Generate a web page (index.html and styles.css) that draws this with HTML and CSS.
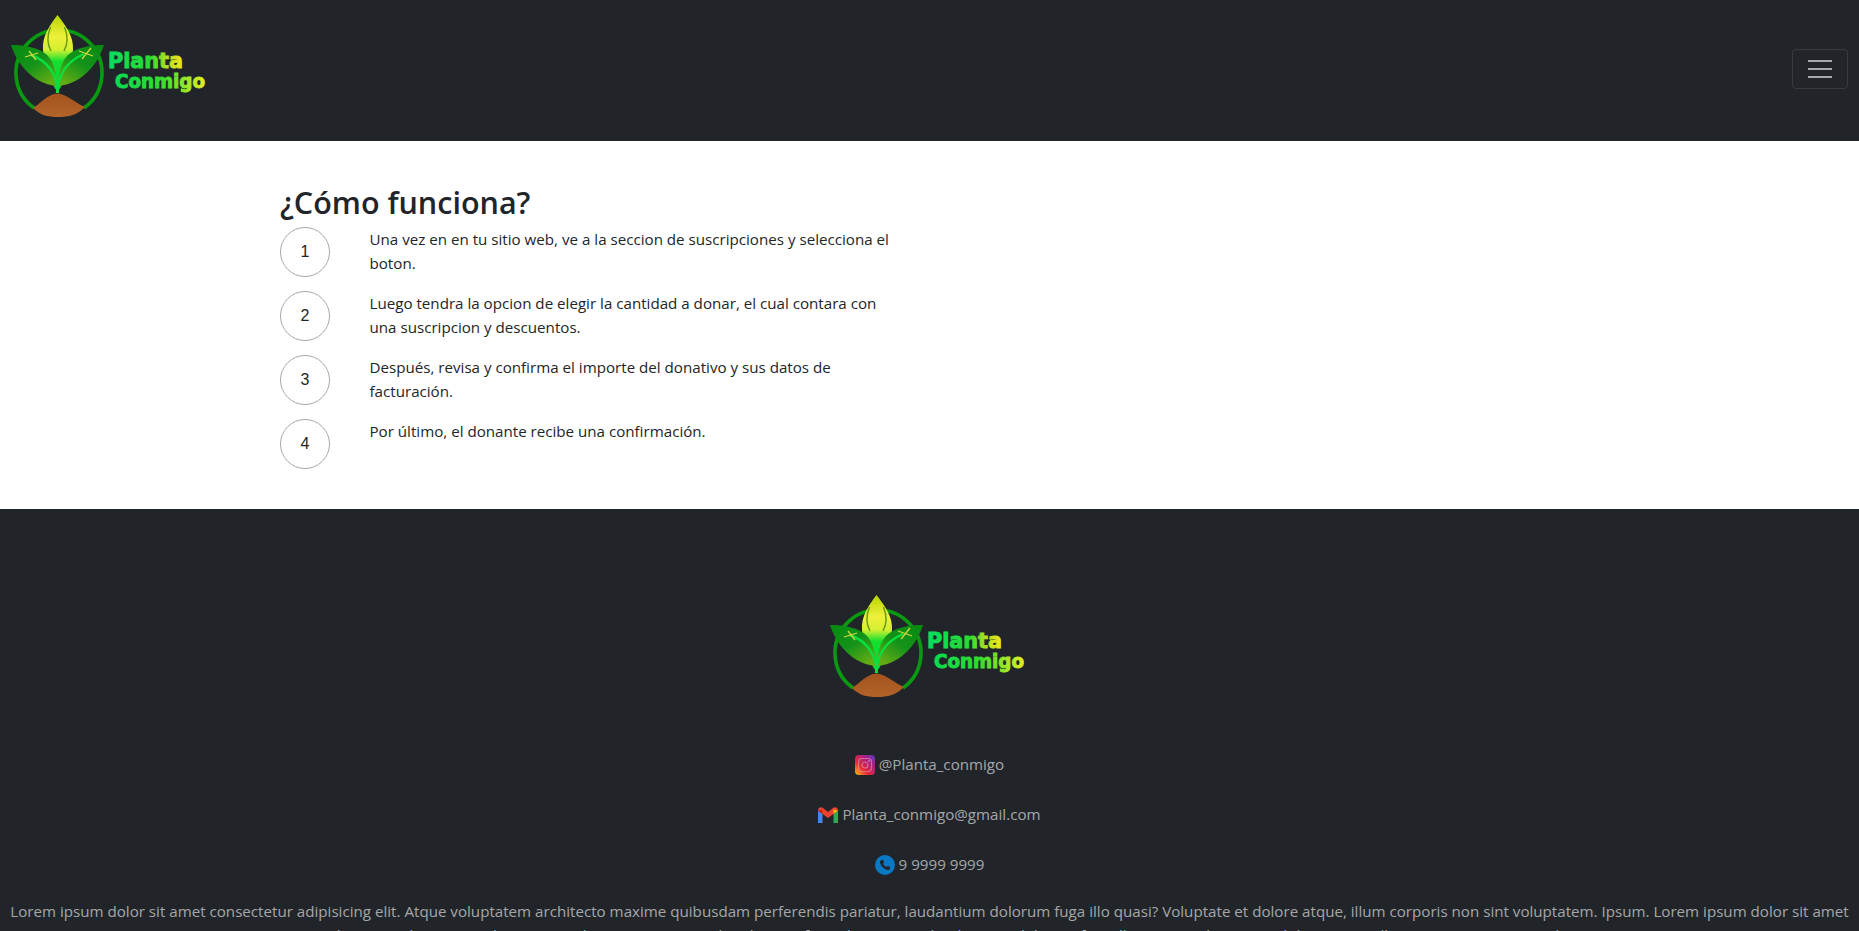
FILE: index.html
```html
<!DOCTYPE html>
<html lang="es">
<head>
<meta charset="utf-8">
<title>Planta Conmigo</title>
<link rel="stylesheet" href="styles.css">
</head>
<body>
<svg class="defs" width="0" height="0" aria-hidden="true">
  <defs>
    <linearGradient id="bud" x1="0" y1="0" x2="0" y2="1">
      <stop offset="0" stop-color="#b8d400"/><stop offset=".28" stop-color="#eef03a"/><stop offset=".45" stop-color="#d4f030"/><stop offset=".6" stop-color="#14e030"/><stop offset="1" stop-color="#08d838"/>
    </linearGradient>
    <linearGradient id="leafL" x1="0" y1="0" x2=".7" y2="1">
      <stop offset="0" stop-color="#078a10"/><stop offset=".55" stop-color="#14931a"/><stop offset="1" stop-color="#62ac14"/>
    </linearGradient>
    <linearGradient id="leafR" x1="1" y1="0" x2=".3" y2="1">
      <stop offset="0" stop-color="#078a10"/><stop offset=".55" stop-color="#14931a"/><stop offset="1" stop-color="#62ac14"/>
    </linearGradient>
    <linearGradient id="soil" x1="0" y1="0" x2="0" y2="1">
      <stop offset="0" stop-color="#a3531c"/><stop offset="1" stop-color="#b2642a"/>
    </linearGradient>
    <linearGradient id="word1" x1="108" y1="0" x2="184" y2="0" gradientUnits="userSpaceOnUse">
      <stop offset="0" stop-color="#08dc60"/><stop offset=".55" stop-color="#28dc30"/><stop offset=".8" stop-color="#c0e020"/><stop offset="1" stop-color="#f0e818"/>
    </linearGradient>
    <linearGradient id="word2" x1="115" y1="0" x2="205" y2="0" gradientUnits="userSpaceOnUse">
      <stop offset="0" stop-color="#08dc50"/><stop offset=".5" stop-color="#30dc30"/><stop offset="1" stop-color="#e8ee20"/>
    </linearGradient>
    <linearGradient id="ig" x1="0" y1="1" x2="1" y2="0">
      <stop offset="0" stop-color="#fcc70a"/><stop offset=".35" stop-color="#e8263a"/><stop offset=".7" stop-color="#a81f86"/><stop offset="1" stop-color="#5a3bc8"/>
    </linearGradient>
    <symbol id="logo" viewBox="8 13 200 115">
      <path d="M34 108A43 43 0 1 1 84 108" fill="none" stroke="#0a9a12" stroke-width="3.6"/>
      <path d="M57.5 15C50 25 42 36 43 50C44 64 50 82 57.5 92C65 82 72 64 73 50C74 36 65 25 57.5 15Z" fill="url(#bud)"/>
      <path d="M50.5 27C47 36 47 44 51 51M64.5 27C68 36 68 44 64 51" fill="none" stroke="#6c9c14" stroke-width="1.5"/>
      <path d="M11 45C24 45 43 47 51 60C55 67 56.5 76 57.5 86C40 85 20 72 11 45Z" fill="url(#leafL)"/>
      <path d="M104 45C91 45 72 47 64 60C60 67 58.5 76 57.5 86C75 85 95 72 104 45Z" fill="url(#leafR)"/>
      <path d="M58 93C57 76 50 62 31 55M57 93C58 76 65 62 84 54" fill="none" stroke="#08e040" stroke-width="2.4"/>
      <path d="M29 51L36 60M25 57L38 53M82 59L91 48M79 51L93 56" stroke="#cfd83c" stroke-width="1.3"/>
      <path d="M33 108C41 103 48 94 57.5 93.5C67 94 75 103 85 107C77 115 69 117 58 117C47 117 40 115 33 108Z" fill="url(#soil)"/>
      <text class="logo-word" x="108" y="68" fill="url(#word1)" stroke="url(#word1)" textLength="75" lengthAdjust="spacingAndGlyphs">Planta</text>
      <text class="logo-word logo-word-sm" x="115" y="88" fill="url(#word2)" stroke="url(#word2)" textLength="90" lengthAdjust="spacingAndGlyphs">Conmigo</text>
    </symbol>
  </defs>
</svg>

<nav class="navbar">
  <a class="brand" href="#"><svg class="logo"><use href="#logo"/></svg></a>
  <button class="toggler" aria-label="Menú"><span></span><span></span><span></span></button>
</nav>

<main class="how">
  <section class="how-col">
    <h2>¿Cómo funciona?</h2>
    <div class="step"><div class="num">1</div><p>Una vez en en tu sitio web, ve a la seccion de suscripciones y selecciona el boton.</p></div>
    <div class="step"><div class="num">2</div><p>Luego tendra la opcion de elegir la cantidad a donar, el cual contara con una suscripcion y descuentos.</p></div>
    <div class="step"><div class="num">3</div><p>Después, revisa y confirma el importe del donativo y sus datos de facturación.</p></div>
    <div class="step"><div class="num">4</div><p>Por último, el donante recibe una confirmación.</p></div>
  </section>
</main>

<footer class="footer">
  <a class="brand footer-brand" href="#"><svg class="logo"><use href="#logo"/></svg></a>
  <p class="contact">
    <svg class="ico" viewBox="0 0 20 20"><rect width="20" height="20" rx="4" fill="url(#ig)"/><rect x="3.5" y="3.5" width="13" height="13" rx="3.5" fill="none" stroke="#e8a0b0" stroke-opacity=".6" stroke-width="1.2"/><circle cx="10" cy="10" r="3" fill="none" stroke="#e8a0b0" stroke-opacity=".6" stroke-width="1.2"/><circle cx="14" cy="6" r=".9" fill="#e8a0b0" fill-opacity=".7"/></svg>
    @Planta_conmigo
  </p>
  <p class="contact">
    <svg class="ico" viewBox="0 0 20 16"><path d="M0 3.5V16H4.5V7Z" fill="#4285f4"/><path d="M15.5 7V16H20V3.5Z" fill="#34a853"/><path d="M0 3.5C0 .8 3 -.6 5 1L10 5 15 1C17 -.6 20 .8 20 3.5L15.5 7 10 11 4.5 7Z" fill="#ea4335"/><path d="M15.5 2.5 20 3.5 15.5 7Z" fill="#fbbc04"/><path d="M0 3.5 4.5 7V2.5Z" fill="#c5221f"/></svg>
    Planta_conmigo@gmail.com
  </p>
  <p class="contact">
    <svg class="ico" viewBox="0 0 20 20"><circle cx="10" cy="10" r="10" fill="#0a78c2"/><path d="M6.2 5.2 8 4.8 9.1 7.4 8 8.4C8.5 9.7 10.2 11.5 11.6 12L12.6 10.9 15.2 12 14.8 13.8C14.5 15 13 15.3 11.8 14.8 8.8 13.8 6.2 11.2 5.2 8.2 4.7 7 5 5.5 6.2 5.2Z" fill="#212529"/></svg>
    9 9999 9999
  </p>
  <p class="lorem">Lorem ipsum dolor sit amet consectetur adipisicing elit. Atque voluptatem architecto maxime quibusdam perferendis pariatur, laudantium dolorum fuga illo quasi? Voluptate et dolore atque, illum corporis non sint voluptatem. Ipsum. Lorem ipsum dolor sit amet consectetur adipisicing elit. Atque voluptatem architecto maxime quibusdam perferendis pariatur, laudantium dolorum fuga illo quasi? Voluptate et dolore atque, illum corporis non sint voluptatem.</p>
</footer>
</body>
</html>
```
FILE: styles.css
```css
* { box-sizing: border-box; }
html, body { margin: 0; height: 931px; overflow: hidden; }
body { font-family: "Open Sans", "Noto Sans", sans-serif; font-size: 15.15px; line-height: 24px; color: #212529; background: #fff; }
.defs { position: absolute; }
.navbar { height: 141px; background: #212529; display: flex; align-items: center; justify-content: space-between; padding: 0 11px 0 8px; }
.brand { display: block; line-height: 0; }
.logo { width: 200px; height: 115px; }
.logo-word { font-family: "DejaVu Sans", sans-serif; font-weight: 700; font-size: 22px; stroke-width: .9; }
.logo-word-sm { font-size: 19px; }
.toggler { width: 56px; height: 40px; margin-bottom: 3px; background: transparent; border: 1px solid rgba(255,255,255,.1); border-radius: 4px; display: flex; flex-direction: column; align-items: center; justify-content: center; gap: 6px; padding: 0; }
.toggler span { display: block; width: 24px; height: 2px; background: rgba(255,255,255,.6); }
.how { height: 368px; padding: 42px 0 0 280px; }
.how-col { width: 624px; }
h2 { margin: 0 0 6px; font-size: 30.5px; line-height: 38.4px; font-weight: 600; }
.step { display: flex; gap: 39.5px; }
.num { flex: 0 0 50px; height: 50px; border: 1px solid #a8a8a8; border-radius: 50%; display: flex; align-items: center; justify-content: center; font-family: "Liberation Sans", sans-serif; font-size: 16px; }
.step p { margin: 0 0 16px; flex: 0 0 528px; }
.footer { background: #212529; color: rgba(255,255,255,.6); text-align: center; padding: 84px 8px 0; height: 422px; }
.footer-brand { width: 206px; margin: 0 auto 44px; text-align: left; }
.contact { margin: 0 0 25.5px; line-height: 24.5px; }
.ico { width: 20px; height: 20px; vertical-align: -5px; }
.lorem { margin: -3px 0 0; }
```
